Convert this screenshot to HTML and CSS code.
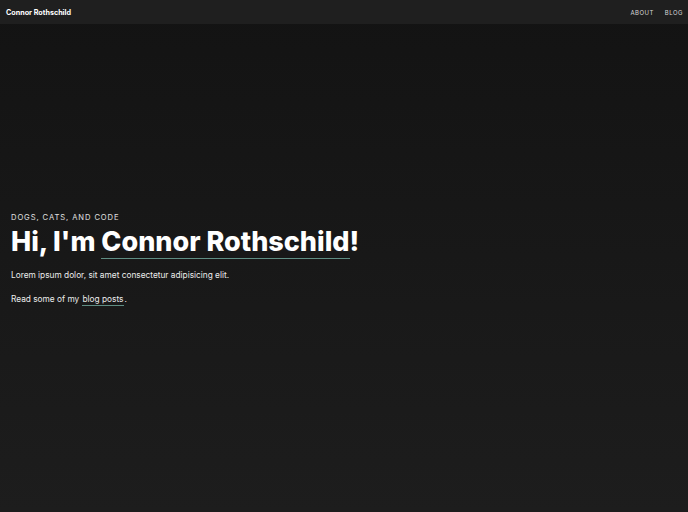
FILE: index.html
```html
<!DOCTYPE html>
<html>
<head>
<meta charset="utf-8">
<link rel="stylesheet" href="styles.css">
</head>
<body>
<header class="nav">
  <a class="brand" href="#">Connor Rothschild</a>
  <nav class="links">
    <a href="#">About</a>
    <a href="#">Blog</a>
  </nav>
</header>
<main class="hero">
  <div class="intro">
    <p class="kicker">Dogs, cats, and code</p>
    <h1 class="title">Hi, I'm <span class="hl">Connor Rothschild</span>!</h1>
    <p class="text">Lorem ipsum dolor, sit amet consectetur adipisicing elit.</p>
    <p class="text">Read some of my <a class="link" href="#">blog posts</a>.</p>
  </div>
</main>
</body>
</html>
```
FILE: styles.css
```css
html, body {
  margin: 0;
  padding: 0;
  height: 100%;
}
body {
  font-family: Inter, "Noto Sans", sans-serif;
  color: #f2f2f2;
  background: linear-gradient(#131313, #1d1d1d);
  display: flex;
  flex-direction: column;
}
a { color: inherit; text-decoration: none; }
.nav {
  height: 24px;
  background: #1f1f1f;
  display: flex;
  align-items: center;
  justify-content: space-between;
  padding: 0 5px 0 6px;
  flex-shrink: 0;
}
.brand {
  font-size: 7.2px;
  font-weight: 700;
  color: #fff;
}
.links {
  display: flex;
  gap: 11px;
}
.links a {
  font-size: 6px;
  text-transform: uppercase;
  letter-spacing: 0.08em;
  color: #d8d8d8;
}
.hero {
  flex: 1;
  display: flex;
  align-items: center;
  padding: 0 11px;
}
.intro {
  margin-top: -6px;
}
.kicker {
  margin: 0 0 4px;
  font-size: 7.6px;
  line-height: 10px;
  text-transform: uppercase;
  letter-spacing: 0.12em;
  color: #e0e0e0;
}
.title {
  margin: 0 0 12px;
  font-size: 27px;
  line-height: 30px;
  font-weight: 800;
  letter-spacing: 0;
  color: #fff;
}
.hl {
  border-bottom: 1px solid #5f8d83;
}
.text {
  margin: 0 0 12px;
  font-size: 8.3px;
  line-height: 12px;
  color: #ececec;
}
.link {
  border-bottom: 1px solid #5f8d83;
  padding: 0 1px 1px;
}
```
